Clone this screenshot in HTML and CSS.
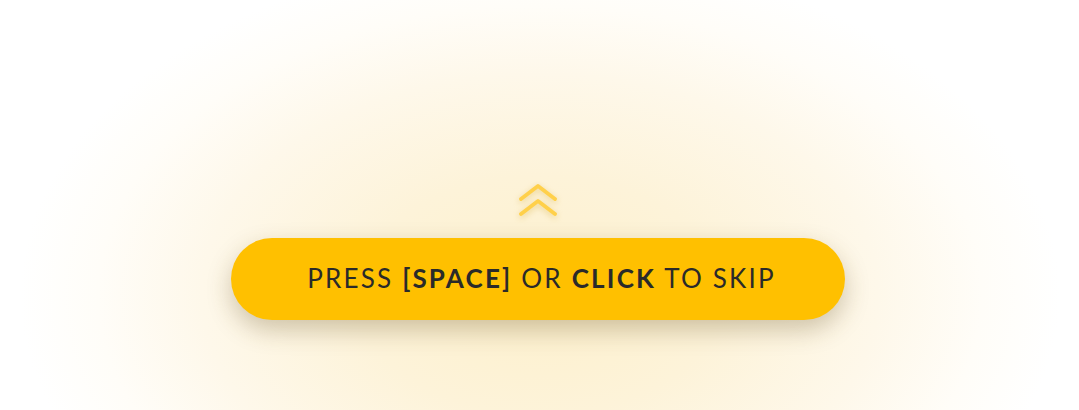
FILE: index.html
```html
<!DOCTYPE html>
<html lang="en">
<head>
<meta charset="utf-8">
<title>Skip</title>
<link rel="stylesheet" href="styles.css">
</head>
<body>
<main class="stage">
  <div class="hint">
    <svg class="chevrons" width="40" height="34" viewBox="0 0 40 34" aria-hidden="true">
      <path d="M3 16 L20 3 L37 16" />
      <path d="M3 31 L20 18 L37 31" />
    </svg>
    <button class="skip" type="button">PRESS <b>[SPACE]</b> OR <b>CLICK</b> TO SKIP</button>
  </div>
</main>
</body>
</html>
```
FILE: styles.css
```css
html, body {
  margin: 0;
  padding: 0;
  height: 100%;
}
body {
  background: #ffffff;
  font-family: Lato, "Noto Sans", sans-serif;
  overflow: hidden;
}
.stage {
  height: 410px;
  width: 100%;
  background: radial-gradient(ellipse 520px 340px at 540px 295px,
    #fdf0cc 0%, #fdf3d9 35%, #fef8ea 65%, #fffdf8 85%, #ffffff 100%);
  display: flex;
  justify-content: center;
}
.hint {
  display: flex;
  flex-direction: column;
  align-items: center;
  padding-top: 183px;
  margin-right: 3px;
}
.chevrons {
  display: block;
  filter: drop-shadow(0 2px 3px rgba(200, 150, 0, 0.35));
}
.chevrons path {
  fill: none;
  stroke: #ffd04a;
  stroke-width: 3.8;
  stroke-linecap: round;
  stroke-linejoin: round;
}
.skip {
  margin-top: 21px;
  width: 614px;
  height: 82px;
  border: none;
  border-radius: 41px;
  background: #ffc000;
  color: #2a2a2a;
  font-family: Lato, "Noto Sans", sans-serif;
  font-size: 26px;
  font-weight: 400;
  letter-spacing: 2.2px;
  box-shadow: 0 10px 24px rgba(90, 70, 20, 0.28);
  cursor: pointer;
  padding: 0 0 3px 7px;
}
.skip b {
  font-weight: 700;
  letter-spacing: 2.2px;
}
```
